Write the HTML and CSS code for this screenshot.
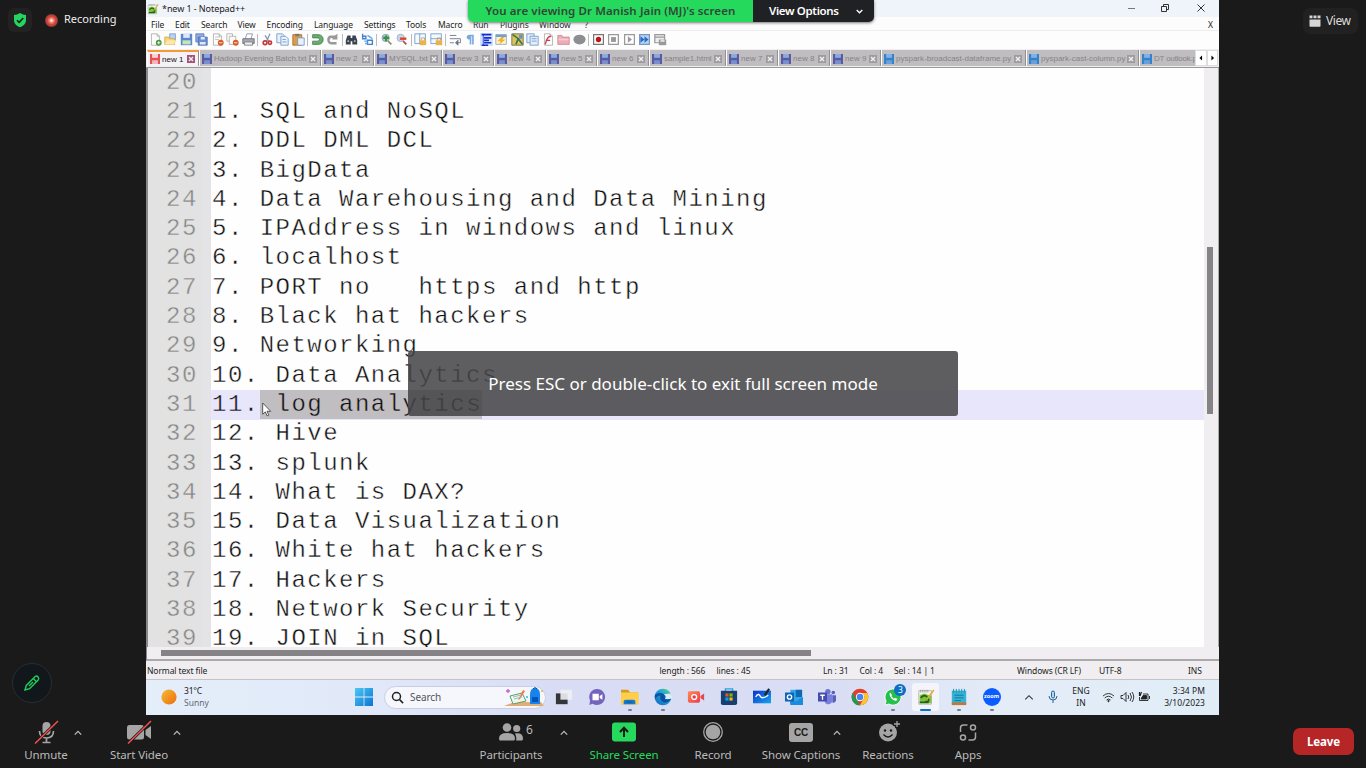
FILE: index.html
```html
<!DOCTYPE html>
<html lang="en">
<head>
<meta charset="utf-8">
<title>Screen share</title>
<link rel="stylesheet" href="styles.css">
</head>
<body>
<svg class="defs" width="0" height="0" aria-hidden="true">
  <defs>
    <linearGradient id="sun" x1="0" y1="0" x2="1" y2="1"><stop offset="0" stop-color="#f5bd35"/><stop offset="1" stop-color="#ee6a10"/></linearGradient>
    <linearGradient id="win" x1="0" y1="0" x2="1" y2="1"><stop offset="0" stop-color="#4cc8f5"/><stop offset="1" stop-color="#0a74d0"/></linearGradient>
    <linearGradient id="edge" x1="0" y1="1" x2="1" y2="0"><stop offset="0" stop-color="#1260c0"/><stop offset=".55" stop-color="#1ca2dc"/><stop offset="1" stop-color="#5fdc70"/></linearGradient>
    <linearGradient id="cam" x1="0" y1="0" x2="1" y2="1"><stop offset="0" stop-color="#ff8a4c"/><stop offset="1" stop-color="#ee3a50"/></linearGradient>
    <linearGradient id="board" x1="0" y1="0" x2="1" y2="1"><stop offset="0" stop-color="#0b32c8"/><stop offset="1" stop-color="#19a5ee"/></linearGradient>
    <radialGradient id="rec"><stop offset="0" stop-color="#fff"/><stop offset=".3" stop-color="#ee8a7c"/><stop offset=".6" stop-color="#d93e32"/><stop offset=".8" stop-color="#a8453d"/><stop offset="1" stop-color="#a8453d" stop-opacity="0"/></radialGradient>
    <symbol id="disk" viewBox="0 0 12 12"><path d="M0 0h12v12H0z" fill="currentColor"/><path d="M2.5 0h7v4.6h-7z" fill="#8db4ea" opacity=".9"/><path d="M2.5 7.5h7V12h-7z" fill="#8db4ea" opacity=".6"/></symbol>
    <symbol id="diskred" viewBox="0 0 12 12"><path d="M0 0h12v12H0z" fill="#e45157"/><path d="M2.5 0h7v4.6h-7z" fill="#fff" opacity=".75"/><path d="M2.5 7.5h7V12h-7z" fill="#fff" opacity=".6"/></symbol>
    <symbol id="close" viewBox="0 0 10 10"><path d="M0 0h10v10H0z" fill="currentColor"/><path d="M2.5 2.500l5 5m0-5l-5 5" stroke="#eee" stroke-width="1.800"/></symbol>
    <symbol id="chev" viewBox="0 0 8 6"><path d="M.8 4.6L4 1.4l3.2 3.2" fill="none" stroke="currentColor" stroke-width="1.3"/></symbol>
    <symbol id="npp" viewBox="0 0 20 20"><path d="M2 3h14v15H2z" fill="#f4f5ec" stroke="#999" stroke-width=".7"/><path d="M4 2v3m2-3v3m2-3v3m2-3v3m2-3v3" stroke="#888" stroke-width=".7"/><path d="M3 8l5-2 8 3v8H3z" fill="#7cc43a"/><path d="M4 11q5-5 8 0t-3 4M3 16h10" fill="none" stroke="#24601a" stroke-width="1.8"/><path d="M18.7 2.2L11 12.5" stroke="#dfae3c" stroke-width="1.8"/></symbol>
    <symbol id="page" viewBox="0 0 16 16"><path d="M3 1h7l3 3v11H3z" fill="#fcfcfc" stroke="#aaa"/><path d="M10 1v3h3" fill="none" stroke="#aaa"/></symbol>
  </defs>
</svg>
<main class="stage">
  <aside class="side left">
    <div class="top-left">
      <span class="shield"><svg width="14" height="16" viewBox="0 0 14 16"><path d="M7 1q3 2 6 2v5c0 4-3 6-6 7.3C4 14 1 12 1 8V3q3 0 6-2z" fill="#24d560"/><path d="M4 8.2l2.2 2.2L10.2 6" fill="none" stroke="#1a1a1a" stroke-width="1.6"/></svg></span>
      <svg class="rec" width="15" height="15"><circle cx="7.5" cy="7.5" r="7" fill="url(#rec)"/></svg>
      <span class="rectext">Recording</span>
    </div>
    <button class="pencil"><svg width="18" height="18" viewBox="0 0 18 18" fill="none" stroke="#22cf5b" stroke-width="1.4"><path d="M2 16l1.3-4.6L12.2 2.500q1.500-1 2.800.4t.4 2.800L6.600 14.700z"/><path d="M10.300 4.500l3.200 3.200M6 12l4-4"/></svg></button>
  </aside>

  <section class="desktop">
    <header class="titlebar">
      <svg width="12" height="14" viewBox="0 0 20 20"><use href="#npp"/></svg>
      <span class="title">*new 1 - Notepad++</span>
      <svg class="winbtns" width="82" height="12" viewBox="0 0 82 12" fill="none" stroke="#333"><path d="M1 6.500h7" stroke="#777"/><path d="M34.500 4.500h5v5h-5zM36.500 4V2.500h5v5H40M70.500 2.500l7 7m0-7l-7 7"/></svg>
    </header>
    <nav class="menu">
      <span>File</span><span>Edit</span><span>Search</span><span>View</span><span>Encoding</span><span>Language</span><span>Settings</span><span>Tools</span><span>Macro</span><span>Run</span><span>Plugins</span><span>Window</span><span>?</span><span>X</span>
    </nav>
    <div class="tools">
      <svg viewBox="0 0 16 16"><use href="#page"/><circle cx="12" cy="12" r="3.600" fill="#419b38"/><path d="M10 12h4m-2-2v4" stroke="#fff"/></svg>
      <svg viewBox="0 0 16 16"><path d="M7 1h7v9H7z" fill="#b9d3f2" stroke="#7499c6"/><path d="M1 5h5l1 2h6v7H1z" fill="#f8d67c" stroke="#d6a144"/><path d="M1 14l3-5h11l-3 5z" fill="#fce9a9"/></svg>
      <svg viewBox="0 0 16 16"><rect x="1" y="1" width="14" height="14" fill="#5a87ce"/><path d="M4 1h8v5H4z" fill="#dce8f8"/><path d="M3 9h10v5H3z" fill="#c7e4b8"/></svg>
      <svg viewBox="0 0 16 16"><path d="M1 1h10v10H1z" fill="#91ace0" stroke="#5578bc"/><path d="M4 5h11v10H4z" fill="#6c8fd0" stroke="#476cb3"/><path d="M7 5h5v3H7zM6 11h7v3H6z" fill="#e0e9f8"/></svg>
      <svg viewBox="0 0 16 16"><use href="#page"/><path d="M5 5h6M5 8h5" stroke="#bbb"/><circle cx="12" cy="12" r="3.600" fill="#da5b26"/><path d="M10 12h4" stroke="#fff"/></svg>
      <svg viewBox="0 0 16 16"><path d="M1 1h7v9H1z" fill="#fff" stroke="#aaa"/><path d="M4 4h8v10H4z" fill="#fafafa" stroke="#aaa"/><circle cx="12" cy="12" r="3.600" fill="#da5b26"/><path d="M10 12h4" stroke="#fff"/></svg>
      <svg viewBox="0 0 16 16"><path d="M4 7l2-6h7l-2 6" fill="#fff" stroke="#88a"/><path d="M1 7h14v6H1z" fill="#a5a9b5" stroke="#666"/><path d="M3 11h10v4H3z" fill="#e9edf4" stroke="#777"/></svg>
      <i></i>
      <svg viewBox="0 0 16 16" fill="none"><path d="M11 1L7 10M5 3l5 8" stroke="#7895b5" stroke-width="1.500"/><circle cx="5" cy="12" r="2.300" stroke="#c83636" stroke-width="2"/><circle cx="11" cy="12" r="2" stroke="#c83636" stroke-width="2"/></svg>
      <svg viewBox="0 0 16 16" fill="#e8f1fc" stroke="#6b94c8"><path d="M1 1h7l2 2v9H1z"/><path d="M6 4h6l3 3v8H6z"/><path d="M8 8h4m-4 3h5"/></svg>
      <svg viewBox="0 0 16 16"><path d="M1 2h11v13H1z" fill="#dc9d4a" stroke="#a7692a"/><path d="M4 1h5v3H4z" fill="#777"/><path d="M7 6h8v9H7z" fill="#e8f1fc" stroke="#6b94c8"/></svg>
      <i></i>
      <svg viewBox="0 0 16 16"><path d="M2 2h7c8 0 8 12 0 12H2v-4h7q3-2 0-4H2z" fill="#67ac72" stroke="#45804c"/></svg>
      <svg viewBox="0 0 16 16"><path d="M14 1v7H8V6H6q-3 3 0 5h7v3H6C0 13 0 3 6 3h5z" fill="#999"/></svg>
      <i></i>
      <svg viewBox="0 0 16 16"><path d="M3 3h4v3h2V3h4l2 6v5H9v-4H7v4H1V9z" fill="#3c4350"/><path d="M3 10h2m6 0h2" stroke="#a6b5c8" stroke-width="2"/></svg>
      <svg viewBox="0 0 16 16" fill="none" stroke="#3f82d0" stroke-width="1.700"><path d="M2 1v6h4V4H2M8 8v6h6V9H8"/><path d="M8 3l6 4M4 10h4M5 13h3" stroke="#63a9ee"/></svg>
      <i></i>
      <svg viewBox="0 0 16 16"><circle cx="7" cy="6" r="4.500" fill="#a9c8e0" stroke="#8d9eac"/><path d="M4 6h7M7.500 3v7" stroke="#37923a" stroke-width="2.500"/><path d="M10 10l4 4" stroke="#8e8c5e" stroke-width="2"/></svg>
      <svg viewBox="0 0 16 16"><circle cx="7" cy="6" r="4.500" fill="#c9d9ea" stroke="#9caab8"/><path d="M6 7h8" stroke="#df4434" stroke-width="3"/><path d="M10 10l4 4" stroke="#b34b3e" stroke-width="2"/></svg>
      <i></i>
      <svg viewBox="0 0 16 16"><path d="M1 1h13v12H1zM7 1v12" fill="#f5f8fc" stroke="#6698c8"/><path d="M7 9h8v6H7z" fill="#eab14f"/><path d="M9 9V6h4v3" fill="none" stroke="#d39a3a"/></svg>
      <svg viewBox="0 0 16 16"><path d="M1 1h13v12H1zM1 7h13" fill="#f5f8fc" stroke="#6698c8"/><path d="M7 9h8v6H7z" fill="#eab14f"/><path d="M9 9V6h4v3" fill="none" stroke="#d39a3a"/></svg>
      <i></i>
      <svg viewBox="0 0 16 16" fill="none" stroke="#667"><path d="M1 3h8M1 7h13v5h-4M1 12h5"/><path d="M11 9l-3 3 3 3z" fill="#4b82ba"/></svg>
      <svg viewBox="0 0 16 16"><path d="M7 2h5v12h-2V4H9v10H7V8C2 8 2 2 7 2z" fill="#79a9e1"/></svg>
      <svg class="active" viewBox="0 0 16 16"><path d="M2 2h12M5 6h9M5 9h6M5 12h9M2 15h8" stroke="#172bd0" stroke-width="2"/><path d="M4 1v15" stroke="#172bd0"/></svg>
      <svg viewBox="0 0 16 16"><path d="M1 2h13v12H1z" fill="#fff3cb" stroke="#8ca2ba"/><path d="M1 2h13v3H1z" fill="#75a0d5"/><path d="M8 5l-5 5h4l-2 4 8-6H9l3-3z" fill="#f1b12e"/></svg>
      <svg viewBox="0 0 16 16"><path d="M1 1h14v14H1z" fill="#dac45e" stroke="#6a6451"/><path d="M2 2l7 5-3 7M9 7l5 7" fill="none" stroke="#3d744a" stroke-width="2"/><path d="M10 2h4v5h-4z" fill="#5d97c3"/></svg>
      <svg viewBox="0 0 16 16" fill="#e2eefb" stroke="#6b94c8"><path d="M1 1h9v11H1z"/><path d="M5 4h10v11H5zM7 7h6M7 10h6"/></svg>
      <svg viewBox="0 0 16 16"><use href="#page"/><path d="M4 14q2-10 7-10M5 9h5" fill="none" stroke="#c93d50" stroke-width="1.600"/></svg>
      <svg viewBox="0 0 16 16"><path d="M1 3h5l1 2h8v9H1z" fill="#edadb6" stroke="#d3828d"/><path d="M2 8h12" stroke="#f8ced3" stroke-width="2"/></svg>
      <svg viewBox="0 0 16 16"><ellipse cx="8" cy="8" rx="7.500" ry="6" fill="#8d8e91"/></svg>
      <i></i>
      <svg viewBox="0 0 16 16"><path d="M2 2h12v12H2z" fill="#fff" stroke="#777" stroke-width="1.500"/><circle cx="8" cy="8" r="3.300" fill="#c31313"/></svg>
      <svg viewBox="0 0 16 16"><path d="M2 2h12v12H2z" fill="#fff" stroke="#999" stroke-width="1.500"/><path d="M5 5h6v6H5z" fill="#999"/></svg>
      <svg viewBox="0 0 16 16"><path d="M2 2h12v12H2z" fill="#fff" stroke="#999" stroke-width="1.500"/><path d="M6 4l5 4-5 4z" fill="#999"/></svg>
      <svg viewBox="0 0 16 16"><path d="M2 2h12v12H2z" fill="#b8d4f4" stroke="#7898c0" stroke-width="1.500"/><path d="M3 4l5 4-5 4zm5 0l5 4-5 4z" fill="#286ac4"/></svg>
      <svg viewBox="0 0 16 16"><path d="M1 2h12v10H1zM1 5h12" fill="#eee" stroke="#999" stroke-width="1.500"/><path d="M6 8h9v7H6z" fill="#999"/><path d="M8 8h5v3H8z" fill="#ddd"/></svg>
    </div>
    <div class="tabs">
      <div class="tab on w52"><svg class="disk"><use href="#diskred"/></svg><b>new 1</b><svg class="x"><use href="#close"/></svg></div>
      <div class="tab w122"><svg class="disk"><use href="#disk"/></svg><b>Hadoop Evening Batch.txt</b><svg class="x"><use href="#close"/></svg></div>
      <div class="tab w53"><svg class="disk"><use href="#disk"/></svg><b>new 2</b><svg class="x"><use href="#close"/></svg></div>
      <div class="tab w68"><svg class="disk"><use href="#disk"/></svg><b>MYSQL.txt</b><svg class="x"><use href="#close"/></svg></div>
      <div class="tab w52"><svg class="disk"><use href="#disk"/></svg><b>new 3</b><svg class="x"><use href="#close"/></svg></div>
      <div class="tab w52"><svg class="disk"><use href="#disk"/></svg><b>new 4</b><svg class="x"><use href="#close"/></svg></div>
      <div class="tab w51"><svg class="disk"><use href="#disk"/></svg><b>new 5</b><svg class="x"><use href="#close"/></svg></div>
      <div class="tab w52"><svg class="disk"><use href="#disk"/></svg><b>new 6</b><svg class="x"><use href="#close"/></svg></div>
      <div class="tab w77"><svg class="disk"><use href="#disk"/></svg><b>sample1.html</b><svg class="x"><use href="#close"/></svg></div>
      <div class="tab w52"><svg class="disk"><use href="#disk"/></svg><b>new 7</b><svg class="x"><use href="#close"/></svg></div>
      <div class="tab w52"><svg class="disk"><use href="#disk"/></svg><b>new 8</b><svg class="x"><use href="#close"/></svg></div>
      <div class="tab w51"><svg class="disk"><use href="#disk"/></svg><b>new 9</b><svg class="x"><use href="#close"/></svg></div>
      <div class="tab py w145"><svg class="disk"><use href="#disk"/></svg><b>pyspark-broadcast-dataframe.py</b><svg class="x"><use href="#close"/></svg></div>
      <div class="tab py w113"><svg class="disk"><use href="#disk"/></svg><b>pyspark-cast-column.py</b><svg class="x"><use href="#close"/></svg></div>
      <div class="tab py last"><svg class="disk"><use href="#disk"/></svg><b>DT outlook.p</b></div>
      <div class="arrows"><svg viewBox="0 0 11 14"><path d="M7 4v6L4 7z"/></svg><svg viewBox="0 0 11 14"><path d="M4 4v6l3-3z"/></svg></div>
    </div>
    <div class="editor">
      <ol class="lines">
        <li><span>20</span><p></p></li>
        <li><span>21</span><p>1. SQL and NoSQL</p></li>
        <li><span>22</span><p>2. DDL DML DCL</p></li>
        <li><span>23</span><p>3. BigData</p></li>
        <li><span>24</span><p>4. Data Warehousing and Data Mining</p></li>
        <li><span>25</span><p>5. IPAddress in windows and linux</p></li>
        <li><span>26</span><p>6. localhost</p></li>
        <li><span>27</span><p>7. PORT no   https and http</p></li>
        <li><span>28</span><p>8. Black hat hackers</p></li>
        <li><span>29</span><p>9. Networking</p></li>
        <li><span>30</span><p>10. Data Analytics</p></li>
        <li class="current"><span>31</span><p>11.<mark> log analytics</mark></p></li>
        <li><span>32</span><p>12. Hive</p></li>
        <li><span>33</span><p>13. splunk</p></li>
        <li><span>34</span><p>14. What is DAX?</p></li>
        <li><span>35</span><p>15. Data Visualization</p></li>
        <li><span>36</span><p>16. White hat hackers</p></li>
        <li><span>37</span><p>17. Hackers</p></li>
        <li><span>38</span><p>18. Network Security</p></li>
        <li><span>39</span><p>19. JOIN in SQL</p></li>
      </ol>
      <div class="vscroll"><div class="vthumb"></div></div>
    </div>
    <div class="hscroll"><div class="hthumb"></div></div>
    <div class="status">
      <span>Normal text file</span><span>length : 566</span><span>lines : 45</span><span>Ln : 31</span><span>Col : 4</span><span>Sel : 14 | 1</span><span>Windows (CR LF)</span><span>UTF-8</span><span>INS</span>
    </div>
    <footer class="taskbar">
      <svg class="sun" width="16" height="16"><circle cx="8" cy="8" r="7.600" fill="url(#sun)"/></svg>
      <div class="weather"><span>31°C</span><small>Sunny</small></div>
      <svg class="start" width="18" height="18" viewBox="0 0 18 18"><path d="M0 0h8.600v8.600H0zM9.400 0H18v8.600H9.400zM0 9.400h8.600V18H0zM9.400 9.400H18V18H9.400z" fill="url(#win)"/></svg>
      <div class="search">
        <svg width="13" height="13" viewBox="0 0 13 13" fill="none" stroke="#222" stroke-width="1.500"><circle cx="5.500" cy="5.500" r="4"/><path d="M8.600 8.600l3.500 3.500"/></svg>
        <span>Search</span>
        <svg class="art" width="41" height="20" viewBox="0 0 41 20"><path d="M0 19l10-4h27l3 4z" fill="#e2ae78"/><path d="M6 9l12-3 4 8-13 3z" fill="#f3f6ef" stroke="#55a06e"/><path d="M19 3l2 1-5 8-2 1z" fill="#ef7d3a"/><path d="M9 10l8-2m-7 4l8-2" stroke="#9bb"/><path d="M4 2v4M2 4h4" stroke="#c45adf" stroke-width="1.300"/><path d="M26 8q0-7 5-7t5 7v9H26z" fill="#1684e8"/><path d="M28 10h6v5h-6z" fill="#0751bd"/><path d="M29 2q2-3 4 0" fill="none" stroke="#104b9e"/><circle cx="38" cy="4" r="1" fill="#f0b431"/><circle cx="23" cy="10" r="1" fill="#35bcda"/></svg>
      </div>
      <div class="apps">
        <span class="app"><svg viewBox="0 0 20 20"><path d="M1 6h13v12H1z" fill="#333539"/><path d="M6 2h13v11H6z" fill="#eeeff3" opacity=".9"/></svg></span>
        <span class="app"><svg viewBox="0 0 20 20"><path d="M10 1a9 9 0 1 1-5 16.500L1.500 19l.8-5A9 9 0 0 1 10 1z" fill="#7365bd"/><path d="M5 6.500h7v7H5zM13 9l3-2v6l-3-2z" fill="#fff"/></svg></span>
        <span class="app run"><svg viewBox="0 0 20 20"><path d="M0 2h8l2 3h9v13H0z" fill="#d99a1c"/><path d="M0 5h19.500v13H0z" fill="#ffcf4a"/><path d="M3 18v-3q0-2 2-2h9q2 0 2 2v3z" fill="#1878ca"/><path d="M6 15.500h7" stroke="#0a529b"/></svg></span>
        <span class="app run"><svg viewBox="0 0 20 20"><circle cx="10" cy="10" r="9.300" fill="url(#edge)"/><path d="M1 8q5-5 10-1 2 2 1 4 1 3 7 1-3 5-8 4-5-2-4-8-3 0-6 4z" fill="#0e519f"/><path d="M11 7q4 3 1 5 4 1 8-1V9l-2-3z" fill="#dfeaf8"/></svg></span>
        <span class="app"><svg viewBox="0 0 20 20"><path d="M1 5q0-1.500 2-1.500h10q1.500 0 1.500 2v9q0 2-2 2H3q-2 0-2-2z" fill="url(#cam)"/><path d="M15 9l4-3v8l-4-3z" fill="#ed4642"/><circle cx="8" cy="10" r="2.700" fill="#e53b48" stroke="#fff" stroke-width="1.500"/></svg></span>
        <span class="app"><svg viewBox="0 0 20 20"><path d="M6 4V1h8v3" fill="none" stroke="#24a6d8" stroke-width="1.500"/><path d="M1 3h18v14q0 2-2 2H3q-2 0-2-2z" fill="#173f72"/><path d="M6 6h3.500v3.500H6z" fill="#f25022"/><path d="M10.500 6H14v3.500h-3.500z" fill="#7fba00"/><path d="M6 10.500h3.500V14H6z" fill="#00a4ef"/><path d="M10.500 10.500H14V14h-3.500z" fill="#ffb900"/></svg></span>
        <span class="app"><svg viewBox="0 0 20 20"><path d="M0 3h20v14H0z" fill="url(#board)"/><path d="M3 10q3-5 5-1t9-1" fill="none" stroke="#fff" stroke-width="1.500"/><path d="M18 1l-5 7" stroke="#222" stroke-width="2.400"/></svg></span>
        <span class="app"><svg viewBox="0 0 20 20"><path d="M6 2h13v15H6z" fill="#31a7e5"/><path d="M12 2h7v8h-7z" fill="#1067b2"/><path d="M5 11l7 4 8-5v9H6z" fill="#1b8cdd"/><path d="M0 5h10v10H0z" fill="#1064b7"/><circle cx="5" cy="10" r="2.400" fill="none" stroke="#fff" stroke-width="1.500"/></svg></span>
        <span class="app"><svg viewBox="0 0 20 20"><circle cx="11" cy="4" r="3" fill="#6c75ce"/><circle cx="17" cy="5" r="2" fill="#5660bd"/><path d="M7 7h9v7q-1 5-6 4-4-1-3-11z" fill="#7780dd"/><path d="M16 8h4v6q-1 3-4 2z" fill="#5660bd"/><path d="M0 5h10v10H0z" fill="#444cad"/><path d="M2.500 8h5M5 8v5" stroke="#fff" stroke-width="1.500"/></svg></span>
        <span class="app"><svg viewBox="0 0 20 20"><circle cx="10" cy="10" r="9.300" fill="#e43d30"/><path d="M2 5.300L7 14l3 5.300A9.300 9.300 0 0 1 2 5.300z" fill="#24994b"/><path d="M10 19.300l5-9.300-3-4.500h6A9.300 9.300 0 0 1 10 19.300z" fill="#fbc52d"/><circle cx="10" cy="10" r="4.600" fill="#fff"/><circle cx="10" cy="10" r="3.600" fill="#4285f4"/></svg></span>
        <span class="app run"><svg viewBox="0 0 20 20"><path d="M10 1a9 9 0 1 1-4.500 16.800L1 19l1.300-4.500A9 9 0 0 1 10 1z" fill="#27bf4c" stroke="#fff"/><path d="M7 5q-2 2 1 6t6 3l1-2-3-1-1 1-3-3 1-1z" fill="#fff"/></svg><em>3</em></span>
        <span class="app sel run"><svg viewBox="0 0 20 20"><use href="#npp"/></svg></span>
        <span class="app run"><svg viewBox="0 0 20 20"><path d="M2 3h16v15H2z" fill="#35b3d6"/><path d="M2 16h16v3H2z" fill="#bd783a"/><path d="M4 1v4m3-4v4m3-4v4m3-4v4m3-4v4" stroke="#188ab3"/><path d="M5 8h10M5 11h10M5 14h7" stroke="#147291"/></svg></span>
        <span class="app run"><span class="zoomapp">zoom</span></span>
      </div>
      <svg class="traychev" width="10" height="7" viewBox="0 0 8 6"><path d="M.8 4.600L4 1.400l3.200 3.200" fill="none" stroke="#333" stroke-width=".9"/></svg>
      <svg class="traymic" width="10" height="14" viewBox="0 0 10 14" fill="#b4d4f2" stroke="#23659f"><rect x="3.500" y="1" width="3" height="7" rx="1.500"/><path d="M1 6q0 4 4 4t4-4M5 10v3" fill="none"/></svg>
      <div class="lang"><span>ENG</span><span>IN</span></div>
      <svg class="tray" width="49" height="12" viewBox="0 0 49 12" fill="none" stroke="#222" stroke-width=".9"><path d="M1 5q5.500-5 11 0M2.700 7q3.800-3.500 7.600 0M4.500 9q2-2 4 0"/><circle cx="6.500" cy="10" r=".7" fill="#222"/><path d="M19 4.500h2l3-3v9l-3-3h-2zM26 4q1.500 2 0 4m2-6q3 4 0 8m2-9q3.500 5 0 10"/><path d="M41 3h5v6.500h-8.500V6M47.500 5v3"/><path d="M41 4.500h3.500V8H39z" fill="#222"/><path d="M37.500 1v4m2-4L38 5" stroke-width="1.200"/></svg>
      <div class="clock"><span>3:34 PM</span><span>3/10/2023</span></div>
    </footer>
  </section>

  <aside class="side right"><button class="view"><svg width="12" height="12" viewBox="0 0 12 12" fill="#d5d5d5"><path d="M.5 4.500h11V11q0 .7-.7.7H1.200q-.7 0-.7-.7zM.5.500h3v2.800h-3zM4.500.500h3v2.800h-3zM8.500.500h3v2.800h-3z"/></svg><span>View</span></button></aside>
</main>

<footer class="meeting">
  <div class="ctl c-mute"><svg width="26" height="24" viewBox="0 0 26 24"><rect x="9.500" y="2" width="8" height="13" rx="4" fill="#a5a5a5"/><path d="M6.500 11q0 7 7 7t7-7M13.500 18v4M9.500 22.500h8" fill="none" stroke="#a5a5a5" stroke-width="1.700"/><path d="M2 23.500L25 1" stroke="#1a1a1a" stroke-width="3"/><path d="M2 23.500L25 1" stroke="#f0504e" stroke-width="1.500"/></svg><span>Unmute</span></div>
  <svg class="cv v1"><use href="#chev"/></svg>
  <div class="ctl c-video"><svg width="26" height="24" viewBox="0 0 26 24"><rect x="1" y="5" width="17" height="14.500" rx="2.500" fill="#a5a5a5"/><path d="M19.500 10l5.500-4v13l-5.500-4z" fill="#a5a5a5"/><path d="M2 23.500L25 1" stroke="#1a1a1a" stroke-width="3"/><path d="M2 23.500L25 1" stroke="#f0504e" stroke-width="1.500"/></svg><span>Start Video</span></div>
  <svg class="cv v2"><use href="#chev"/></svg>
  <div class="ctl c-people"><div class="count"><svg width="26" height="24" viewBox="0 0 26 24" fill="#a5a5a5"><circle cx="9" cy="7.500" r="4.300"/><circle cx="18.700" cy="8.500" r="3.600"/><path d="M1 18.500q0-5.500 8-5.500t8 5.500q0 2-1 2H2q-1 0-1-2zM17 13.500q8-1 8 5 0 2-1 2h-6q1-3-1-7z"/></svg><i>6</i></div><span>Participants</span></div>
  <svg class="cv v3"><use href="#chev"/></svg>
  <div class="ctl c-share"><svg width="26" height="24" viewBox="0 0 26 24"><rect x="1" y="2.500" width="24" height="19" rx="3" fill="#24d95b"/><path d="M13 17V8m-4 4l4-4.300 4 4.300" fill="none" stroke="#1a1a1a" stroke-width="2"/></svg><span>Share Screen</span></div>
  <div class="ctl c-record"><svg width="26" height="24" viewBox="0 0 26 24"><circle cx="13" cy="12" r="9.300" fill="none" stroke="#a5a5a5" stroke-width="1.300"/><circle cx="13" cy="12" r="7.300" fill="#a5a5a5"/></svg><span>Record</span></div>
  <div class="ctl c-caption"><div class="cc">CC</div><span>Show Captions</span></div>
  <svg class="cv v4"><use href="#chev"/></svg>
  <div class="ctl c-react"><svg width="26" height="24" viewBox="0 0 26 24"><circle cx="13" cy="12.500" r="9" fill="#a5a5a5"/><path d="M22 0v8m-4-4h8" stroke="#1a1a1a" stroke-width="4"/><path d="M22 1v6m-3-3h6" stroke="#a5a5a5" stroke-width="1.300"/><circle cx="10" cy="10.500" r="1.200" fill="#1a1a1a"/><circle cx="16" cy="10.500" r="1.200" fill="#1a1a1a"/><path d="M8.500 14.500q4.500 5 9 0" fill="none" stroke="#1a1a1a" stroke-width="1.400"/></svg><span>Reactions</span></div>
  <div class="ctl c-apps"><svg width="26" height="24" viewBox="0 0 26 24" fill="none" stroke="#a5a5a5" stroke-width="1.500"><path d="M5.500 12V8q0-3 3-3h4M20.500 12.500V17q0 3-3 3h-4"/><circle cx="18" cy="7.500" r="2.500"/><circle cx="8" cy="17.500" r="2.500"/></svg><span>Apps</span></div>
  <button class="leave">Leave</button>
</footer>

<div class="banner"><span class="viewing">You are viewing Dr Manish Jain (MJ)'s screen</span><span class="options">View Options <svg width="7" height="5" viewBox="0 0 7 5"><path d="M.7 1l2.800 2.800L6.300 1" fill="none" stroke="#fff" stroke-width="1.300"/></svg></span></div>
<div class="toast">Press ESC or double-click to exit full screen mode</div>
<svg class="cursor" width="10" height="15" viewBox="0 0 10 15"><path d="M.7 1v11.200l2.600-2.300 1.800 4 1.700-.8L5 9.300h3.700z" fill="#fff" stroke="#333" stroke-width=".8"/></svg>
</body>
</html>
```
FILE: styles.css
```css
* { box-sizing: border-box; }
body { margin: 0; width: 1366px; height: 768px; overflow: hidden; background: #1a1a1a; font-family: "Noto Sans", "Open Sans", sans-serif; color: #222; position: relative; }
svg { display: block; flex: none; }
button { font: inherit; border: 0; padding: 0; }
.defs { position: absolute; }
span, b { white-space: nowrap; }
.stage { display: flex; height: 715px; }
.side { display: flex; flex-direction: column; }
.left { width: 146px; justify-content: space-between; padding: 8px 0 12px 8px; }
.right { width: 147px; align-items: flex-end; padding: 8px 8px 0 0; }
.top-left { display: flex; align-items: center; height: 24px; }
.shield { width: 24px; height: 24px; border-radius: 6px; background: #222; display: grid; place-items: center; }
.rec { margin-left: 12px; }
.rectext { margin-left: 5px; color: #eee; font-size: 11px; line-height: 22px; margin-top: -2px; }
.pencil { width: 40px; height: 40px; margin-left: 4px; border-radius: 50%; background: #11171a; border: 1px solid #292d31; display: grid; place-items: center; }
.view { display: flex; align-items: center; gap: 5px; height: 26px; width: 55px; padding-left: 6px; border-radius: 7px; background: #212121; color: #ddd; font-size: 12px; letter-spacing: -.45px; }
.view span { margin-top: -2px; }

.desktop { width: 1073px; display: flex; flex-direction: column; background: #f0eef1; }
.titlebar { display: flex; align-items: center; height: 17px; background: #eff3fa; padding-left: 1px; }
.title { margin-left: 3px; font-size: 9px; letter-spacing: -.08px; }
.winbtns { margin-left: auto; margin-right: 10px; margin-top: -1px; }
.menu { display: grid; grid-template-columns: 24px 26px 36.500px 29px 47.500px 50px 42px 32px 35px 27px 39px 45.500px 1fr 11px; height: 14px; padding-left: 5px; background: #fcfcfd; font-size: 8.500px; line-height: 15px; letter-spacing: -.1px; border-bottom: 1px solid #eee; }
.tools { display: flex; align-items: center; height: 18px; padding-left: 1.400px; padding-bottom: 1px; background: #fdfdfe; }
.tools svg { width: 13px; height: 13px; margin: 0 1.250px; }
.tools i { width: 1px; height: 12px; margin: 0 1.250px; background: #bbb; }
.tools .active { background: #cfe4fa; }
.tabs { display: flex; height: 19px; padding: 1px 0 1px 1px; background: #f0eef0; border-bottom: 1px solid #999; }
.tab { display: flex; align-items: center; height: 16px; padding: 1px 3px 0 2px; background: #c0bdc1; border-left: 1px solid #fff; border-right: 1px solid #929094; color: #5a5aa0; overflow: hidden; flex: none; }
.tab b { font: 8px "Liberation Sans", Arial, sans-serif; color: #858386; margin-left: 2px; }
.tab.on { background: #f5f2f5; border-top: 2px solid #f39a36; padding-top: 0; }
.tab.on b { color: #111; }
.tab.on .x { color: #a3527b; }
.tab.py { color: #3482c9; }
.disk { width: 10px; height: 10px; }
.x { width: 8px; height: 8px; color: #9e9ca0; margin-left: auto; }
.w51 { width: 51px; } .w52 { width: 52px; } .w53 { width: 53px; } .w68 { width: 68px; } .w77 { width: 77px; } .w113 { width: 113px; } .w122 { width: 122px; } .w145 { width: 145px; }
.last { width: 56px; padding-right: 0; border-right: 0; }
.last b { letter-spacing: -.2px; }
.arrows { display: flex; width: 23px; background: #fff; height: 16px; }
.arrows svg { width: 11.500px; height: 16px; border: 1px solid #ddd; }

.editor { display: flex; height: 579px; border-left: 2px solid #89878b; border-right: 1px solid #aaa; overflow: hidden; }
.lines { list-style: none; margin: 0; padding: 0; width: 1056px; background: linear-gradient(90deg, #e2e2e2 0 54px, #e4e4e6 54px 63px, #fefefe 63px); font: 24px/30px "Liberation Mono", "Courier New", monospace; letter-spacing: 1.480px; }
.lines li { display: grid; grid-template-columns: 63px 1fr; height: 29.300px; }
.lines li:first-child { height: 29px; line-height: 29px; }
.lines span { padding-left: 18px; color: #858585; -webkit-text-stroke: .4px #e2e2e2; }
.lines p { margin: 0; padding-left: 1px; white-space: pre; color: #101010; -webkit-text-stroke: .4px #fefefe; }
.lines .current p { background: #e8e6fb; -webkit-text-stroke-color: #e8e6fb; }
.lines mark { display: inline-block; height: 29px; background: #c0bec1; color: inherit; -webkit-text-stroke-color: #c0bec1; }
.vscroll { flex: 1; background: #f0eef1; padding: 179px 0 0 3px; }
.vthumb { width: 6px; height: 167px; background: #858386; }
.hscroll { height: 14px; background: #f0eef1; border-left: 1px solid #89878b; border-bottom: 2px solid #aba9ac; padding: 3px 0 0 14px; }
.hthumb { width: 650px; height: 6px; background: #858386; }
.status { display: grid; grid-template-columns: 512.500px 57px 106.500px 36.500px 34.500px 123px 82px 89px 1fr; height: 19px; padding-left: 1px; border-bottom: 1px solid #c5c3c7; font-size: 8.500px; line-height: 20px; letter-spacing: -.1px; }
.taskbar { display: flex; align-items: center; height: 35px; padding-bottom: 1px; background: linear-gradient(90deg, #e4eef9, #e1e9f9 20%, #d8ddf5 38%, #d9def4 65%, #e4ecf7 80%, #e0edf7); }
.sun { margin-left: 15px; }
.weather { display: flex; flex-direction: column; width: 174px; margin-left: 7px; font-size: 8.500px; line-height: 12px; letter-spacing: -.2px; }
.weather small { font-size: 8.500px; color: #667; letter-spacing: 0; }
.start { margin-left: -3px; }
.search { display: flex; align-items: center; width: 162px; height: 23px; margin-left: 11px; padding-left: 6px; border-radius: 12px; background: #f5f7fd; border: 1px solid #c9cee2; font-size: 10px; color: #555; }
.search span { margin-left: 6px; letter-spacing: -.1px; }
.art { margin-left: auto; }
.apps { display: flex; margin-left: 2px; }
.app { position: relative; display: grid; place-items: center; width: 32.860px; height: 28px; }
.app svg { width: 18px; height: 18px; }
.app.run::after { content: ""; position: absolute; bottom: 0; left: 14.500px; width: 4px; height: 2px; border-radius: 1px; background: #777d89; }
.app.sel::before { content: ""; position: absolute; inset: 0 3px; background: #f4f4fb; border-radius: 3px; }
.app.sel svg { position: relative; }
.app.sel::after { left: 11px; width: 11px; background: #0c70c8; }
.app em { position: absolute; right: 3px; top: 1px; width: 12px; height: 12px; border-radius: 50%; background: #0b6fc4; color: #fff; font: 8.500px/12px "Noto Sans", sans-serif; text-align: center; }
.zoomapp { width: 18px; height: 18px; border-radius: 50%; background: #0b5cff; color: #fff; font-size: 5.500px; line-height: 17px; font-weight: 700; text-align: center; }
.traychev { margin-left: 16px; }
.traymic { margin-left: 14px; }
.lang { display: flex; flex-direction: column; width: 24px; margin-left: 11px; text-align: center; font-size: 8.500px; line-height: 12px; }
.tray { margin-left: 9px; }
.clock { display: flex; flex-direction: column; margin-left: auto; margin-right: 14px; text-align: right; font-size: 8.500px; line-height: 12px; letter-spacing: .05px; }

.meeting { display: flex; height: 53px; padding-left: 1px; color: #bbb; font-size: 11.500px; }
.ctl { display: flex; flex-direction: column; align-items: center; padding-top: 5px; letter-spacing: -.1px; flex: none; }
.ctl > span { line-height: 16px; margin-top: 3px; }
.count { display: flex; width: 26px; }
.count i { font-style: normal; font-size: 12px; line-height: 20px; margin-left: 2px; }
.c-mute { width: 46px; margin-left: 22px; }
.c-video { width: 68px; margin-left: 16px; }
.c-people { width: 68px; margin-left: 296px; }
.c-share { width: 78px; margin-left: 17px; color: #24d95b; }
.c-record { width: 60px; margin-left: 20px; }
.c-caption { width: 88px; margin-left: 14px; }
.c-react { width: 60px; margin-left: 17px; }
.c-apps { width: 60px; margin-left: 20px; }
.cc { width: 24px; height: 19px; margin: 2.500px 0; border-radius: 3px; background: #a5a5a5; color: #1a1a1a; font: 700 10px/19px "Liberation Sans", sans-serif; text-align: center; }
.cv { width: 8px; height: 6px; margin-top: 15px; color: #bbb; }
.v1 { margin-left: 5px; margin-right: 7px; }
.v3 { margin-left: 15px; }
.v4 { margin-left: -12px; }
.leave { width: 61px; height: 27px; margin: 13px 0 0 295px; border-radius: 7px; background: #b72626; color: #fff; font-size: 11.500px; font-weight: 700; letter-spacing: -.1px; }

.banner { position: absolute; left: 468px; top: 0; display: flex; width: 406px; height: 22px; border-radius: 0 0 5px 5px; overflow: hidden; box-shadow: 0 1px 3px #777; font-size: 11.500px; font-weight: 600; line-height: 22px; letter-spacing: .1px; }
.viewing { width: 285px; background: #24d95b; color: #31473a; text-align: center; }
.options { flex: 1; display: flex; align-items: center; justify-content: space-between; background: #202124; color: #fff; padding: 0 11px 0 16px; letter-spacing: -.35px; }
.toast { position: absolute; left: 408px; top: 351px; width: 550px; height: 65px; border-radius: 3px; background: rgba(67, 68, 70, .86); color: #fff; font-size: 17px; line-height: 66px; text-align: center; }
.cursor { position: absolute; left: 262px; top: 402px; }
```
